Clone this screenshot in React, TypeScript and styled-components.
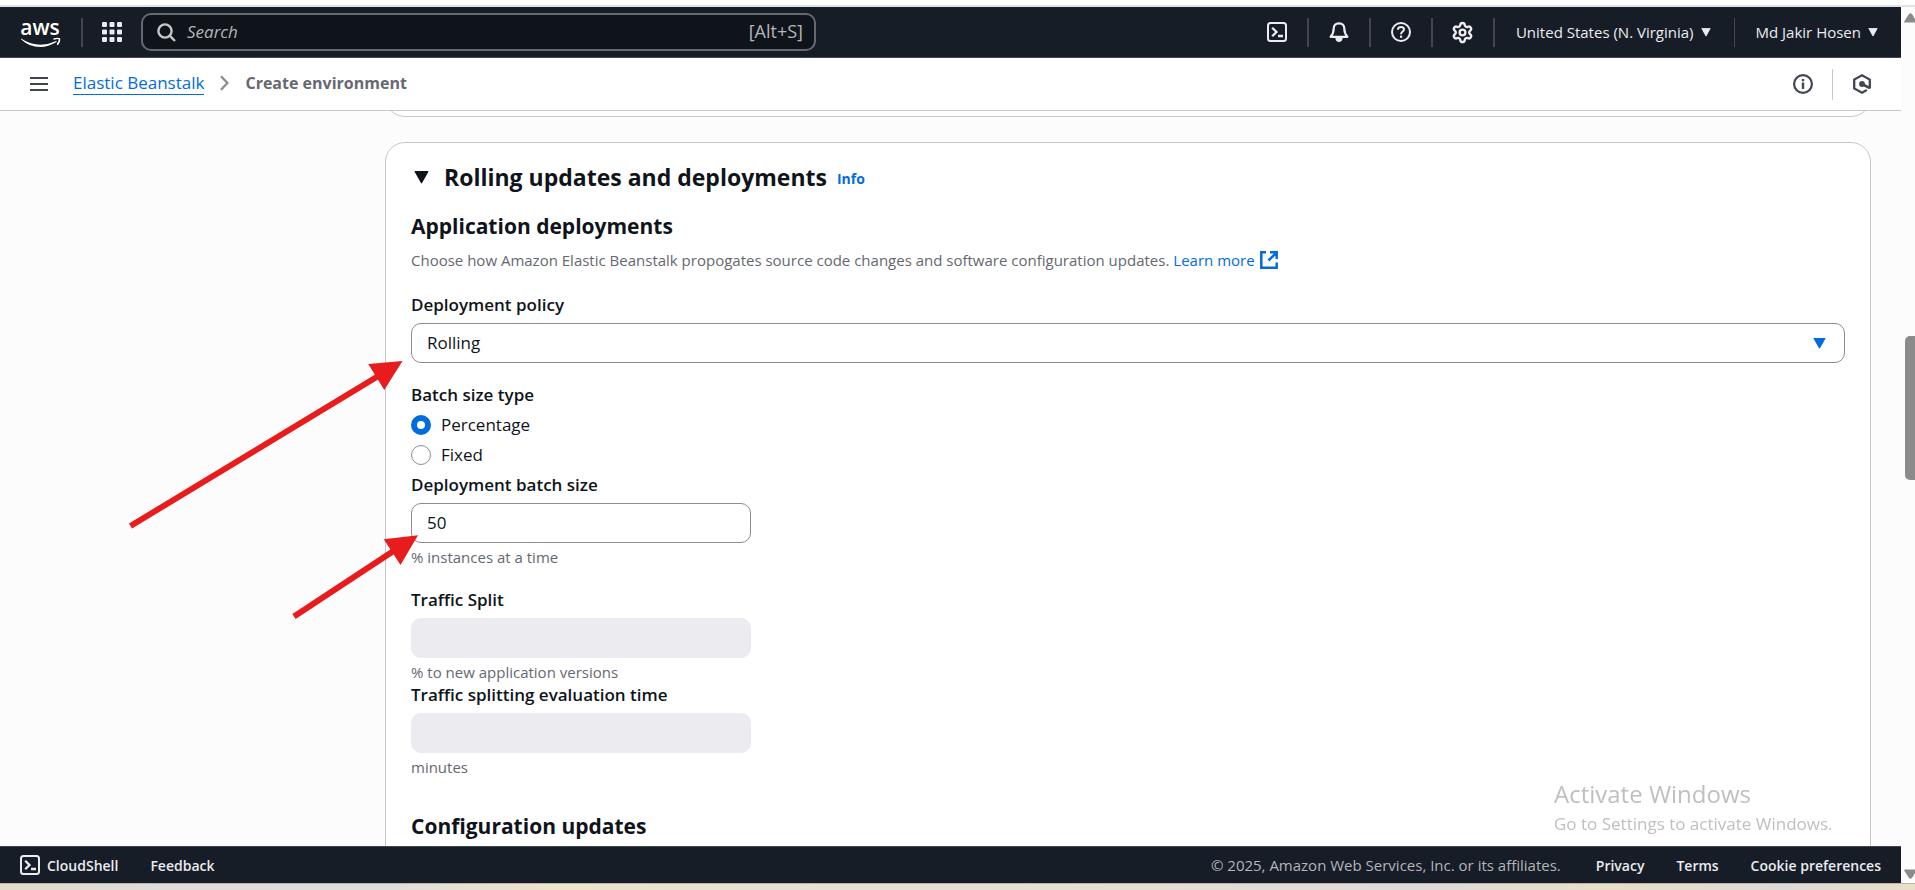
import React, { useState } from "react";
import styled, { createGlobalStyle, css } from "styled-components";
import { Settings } from "lucide-react";

const GlobalStyle = createGlobalStyle`
  *, *::before, *::after { box-sizing: border-box; }
  body { margin: 0; background: #fcfcfd; overflow: hidden; }
  body, button, input, select { font-family: "Open Sans", "Noto Sans", sans-serif; }
  button { border: 0; padding: 0; background: none; color: inherit; cursor: pointer; }
  h2, h3, p, ul, ol { margin: 0; padding: 0; }
  svg { display: block; flex: none; }
`;

const Screen = styled.div`
  display: flex;
  flex-direction: column;
  height: 100vh;
  color: #0f141a;
  font-size: 17px;
  line-height: 25px;
`;

const BrowserEdge = styled.div`
  flex: none;
  height: 7px;
  background: #fff;
  border-bottom: 2px solid #e1e3ea;
`;

const Taskbar = styled.div`
  flex: none;
  height: 7px;
  border-top: 1px solid #b9b5ae;
  background: linear-gradient(90deg, #e3dccb 0%, #dedddb 10%, #dfdedb 20%, #eee4ca 29%, #e6e1d2 40%, #e4e0d4 60%, #dedcd8 74%, #e9dfc8 84%, #dddbd6 93%, #e9dfc8 100%);
`;

const Body = styled.div`
  display: flex;
  flex: 1;
  min-height: 0;
`;

const Page = styled.div`
  display: flex;
  flex: 1;
  flex-direction: column;
  min-width: 0;
`;

/* Scroll bar */
const ScrollTrack = styled.div`
  display: flex;
  flex: none;
  flex-direction: column;
  align-items: flex-end;
  width: 14px;
  padding: 6px 0 4px;
  overflow: hidden;
  background: #fcfcfc;
`;
const ScrollSpace = styled.div<{ $grow: number }>`
  flex: ${(p) => p.$grow} 1 0;
`;
const ScrollThumb = styled.div`
  flex: 144 1 0;
  width: 10px;
  border-radius: 5px 0 0 5px;
  background: #8b8b8b;
`;

/* Top navigation */
const TopNav = styled.header`
  display: flex;
  flex: none;
  align-items: center;
  height: 51px;
  border-bottom: 1px solid #424650;
  background: #161d26;
  color: #ebebf0;
  font-size: 15px;
  font-weight: 500;
`;
const LogoLink = styled.a`
  padding: 0 20px;
`;
const Divider = styled.span<{ $thin?: boolean; $light?: boolean }>`
  flex: none;
  width: ${(p) => (p.$thin ? 1 : 2)}px;
  height: ${(p) => (p.$light ? 31 : 29)}px;
  background: ${(p) => (p.$light ? "#c6c6cd" : "#424650")};
`;
const IconButton = styled.button<{ $narrow?: boolean }>`
  display: flex;
  align-items: center;
  justify-content: center;
  width: ${(p) => (p.$narrow ? 58 : 60)}px;
  height: 40px;
`;
const SearchBox = styled.label`
  display: flex;
  align-items: center;
  gap: 11px;
  width: 675px;
  height: 38px;
  padding: 0 11px 0 14px;
  border: 2px solid #656871;
  border-radius: 10px;
  background: #0f141a;
`;
const SearchInput = styled.input`
  flex: 1;
  min-width: 0;
  padding: 0 0 2px;
  border: 0;
  outline: 0;
  background: transparent;
  color: #ebebf0;
  font-size: 17px;
  &::placeholder { color: #b4b4bb; font-style: italic; opacity: 1; }
`;
const Shortcut = styled.span`
  padding-bottom: 2px;
  color: #b4b4bb;
  font-size: 18px;
  font-weight: 400;
`;
const NavEnd = styled.div<{ $inset?: boolean }>`
  display: flex;
  align-items: center;
  margin-left: auto;
  padding-right: ${(p) => (p.$inset ? 10 : 0)}px;
`;
const MenuButton = styled.button`
  display: flex;
  align-items: center;
  gap: 7px;
  height: 40px;
  padding: 0 23px 0 21px;
  font-size: 15px;
  font-weight: 500;
  white-space: nowrap;
`;

/* Breadcrumb bar */
const CrumbBar = styled.nav`
  display: flex;
  flex: none;
  align-items: center;
  height: 53px;
  padding-left: 30px;
  border-bottom: 1px solid #c6c6cd;
  background: #fff;
  color: #424650;
`;
const Crumbs = styled.ol`
  display: flex;
  align-items: center;
  gap: 16px;
  margin-left: 25px;
  padding-bottom: 2px;
  list-style: none;
`;
const Crumb = styled.li`
  display: flex;
  align-items: center;
  gap: 16px;
  color: #656871;
  font-weight: 700;
  font-size: 16px;
`;
const CrumbLink = styled.a`
  border-bottom: 1px solid #006ce0;
  color: #006ce0;
  font-size: 17px;
  font-weight: 400;
  line-height: 22px;
  text-decoration: none;
`;

/* Content */
const Main = styled.main`
  flex: 1;
  min-height: 0;
  padding: 0 30px 0 385px;
  overflow: hidden;
  background: #fcfcfd;
`;
const cardFrame = css`
  border: 1px solid #c6c6cd;
  border-radius: 20px;
  background: #fff;
`;
const PreviousCard = styled.section`
  ${cardFrame}
  height: 40px;
  margin: -34px 0 25px;
`;
const Card = styled.section`
  ${cardFrame}
  padding: 20px 25px 60px;
`;
const CardHeader = styled.div`
  display: flex;
  align-items: baseline;
  gap: 10px;
  margin-bottom: 20px;
`;
const ExpandButton = styled.button`
  display: flex;
  align-items: center;
  gap: 15px;
  padding-left: 3px;
  font-size: 23px;
  font-weight: 700;
  line-height: 28px;
`;
const InfoLink = styled.a`
  color: #006ce0;
  font-size: 14px;
  font-weight: 700;
  text-decoration: none;
`;
const SectionTitle = styled.h3`
  font-size: 21px;
  font-weight: 700;
  line-height: 30px;
`;
const Description = styled.p`
  display: flex;
  align-items: center;
  gap: 4px;
  margin: 9px 0 22px;
  color: #656871;
  font-size: 15px;
  line-height: 20px;
  white-space: nowrap;
`;
const ExternalLink = styled.a`
  display: inline-flex;
  align-items: center;
  gap: 5px;
  color: #006ce0;
  text-decoration: none;
`;
const Field = styled.div<{ $after?: number }>`
  display: flex;
  flex-direction: column;
  gap: 6px;
  margin-bottom: ${(p) => p.$after ?? 0}px;
`;
const FieldLabel = styled.label`
  font-weight: 600;
`;
const RadioGroup = styled.fieldset`
  display: flex;
  flex-direction: column;
  gap: 5px;
  margin: 0 0 5px;
  padding: 0;
  border: 0;
`;
const GroupLabel = styled.legend`
  margin-bottom: 5px;
  padding: 0;
  font-weight: 600;
`;
const RadioLabel = styled.label`
  display: flex;
  align-items: center;
  gap: 10px;
`;
const Radio = styled.input`
  appearance: none;
  width: 20px;
  height: 20px;
  margin: 1px 0 0;
  border: 1px solid #8c8c94;
  border-radius: 50%;
  background: #fff;
  &:checked { border: 6px solid #006ce0; }
`;
const controlFrame = css`
  height: 40px;
  padding: 0 15px 2px;
  border: 1px solid #8c8c94;
  border-radius: 10px;
  background: #fff;
  color: #0f141a;
  font-size: 17px;
`;
const TextInput = styled.input`
  ${controlFrame}
  width: 340px;
  &:disabled { border-color: #ebebf0; background: #ebebf0; }
`;
const SelectWrap = styled.div`
  display: grid;
  align-items: center;
  & > * { grid-area: 1 / 1; }
  & > svg { justify-self: end; margin-right: 19px; pointer-events: none; }
`;
const SelectInput = styled.select`
  ${controlFrame}
  appearance: none;
  width: 100%;
`;
const Hint = styled.p`
  margin-top: -2px;
  color: #656871;
  font-size: 15px;
  line-height: 20px;
`;

/* Footer */
const Footer = styled.footer`
  display: flex;
  flex: none;
  align-items: center;
  justify-content: space-between;
  height: 37px;
  padding: 0 20px;
  border-top: 1px solid #424650;
  background: #161d26;
  color: #ebebf0;
  font-size: 14px;
  font-weight: 600;
`;
const FooterGroup = styled.div`
  display: flex;
  align-items: center;
  gap: 32px;
`;
const FooterButton = styled.button`
  display: flex;
  align-items: center;
  gap: 7px;
  font-size: 14px;
  font-weight: 600;
`;
const FooterLink = styled.a`
  color: inherit;
  text-decoration: none;
`;
const Copyright = styled.small`
  margin-right: 3px;
  color: #b4b4bb;
  font-size: 15px;
  font-weight: 400;
`;

/* Layers over the page */
const Annotations = styled.svg`
  position: fixed;
  top: 350px;
  left: 120px;
  pointer-events: none;
`;
const Watermark = styled.aside`
  position: fixed;
  right: 77px;
  bottom: 54px;
  width: 284px;
  color: #bfbfbf;
  font-size: 17px;
  line-height: 24px;
  white-space: nowrap;
  pointer-events: none;
`;
const WatermarkTitle = styled.p`
  font-size: 24px;
  line-height: 36px;
`;

function Caret({ width, height, color }: { width: number; height: number; color: string }) {
  return (
    <svg width={width} height={height} viewBox="0 0 12 10" preserveAspectRatio="none" aria-hidden="true">
      <path d="M1 .5h10L6 9z" fill={color} stroke={color} strokeLinejoin="round" />
    </svg>
  );
}

function AwsLogo() {
  return (
    <svg width="41" height="38" viewBox="0 -8 41 38" role="img" aria-label="AWS home">
      <text x="20" y="14" textAnchor="middle" fill="#fff" fontFamily="Open Sans" fontSize="21" fontWeight="600">aws</text>
      <path d="M1 17.500Q18 28.500 35.500 20.200Q37 19.600 36.500 20.900Q28 26 20.500 26Q9 26 1 18.200z" fill="#fff" />
      <path d="M33.500 18.200Q37.800 16.800 39.400 17.800Q40 20.500 37.200 23.700" fill="none" stroke="#fff" strokeWidth="1.500" />
    </svg>
  );
}

function TerminalIcon() {
  return (
    <svg width="20" height="20" viewBox="0 0 20 20" fill="none" stroke="#ebebf0" strokeWidth="2" aria-hidden="true">
      <rect x="1" y="1" width="18" height="18" rx="2.500" />
      <path d="M5.200 5.800 9.500 10l-4.300 4.300M11 14h5" strokeWidth="2.300" />
    </svg>
  );
}

function BellIcon() {
  return (
    <svg width="20" height="20" viewBox="0 0 20 20" fill="none" stroke="#ebebf0" strokeWidth="2.200" strokeLinejoin="round" aria-hidden="true">
      <path d="M10 1.300C6.500 1.300 4.700 3.700 4.700 6.600C4.700 10.500 4.300 12 1.600 14.800h16.800C15.700 12 15.300 10.500 15.300 6.600C15.300 3.700 13.500 1.300 10 1.300z" />
      <path d="M6.300 15.500c0 6 7.400 6 7.400 0z" fill="#ebebf0" stroke="none" />
    </svg>
  );
}

function HelpIcon() {
  return (
    <svg width="20" height="20" viewBox="0 0 20 20" fill="none" stroke="#ebebf0" strokeWidth="2" aria-hidden="true">
      <circle cx="10" cy="10" r="9" />
      <path d="M6.800 7.800C7 3.900 13.300 4.200 13 7.600C12.800 9.600 10 9.600 10 12.300" />
      <path d="M9 13.600h2.200v2.200H9z" fill="#ebebf0" stroke="none" />
    </svg>
  );
}

function AppsIcon() {
  const spots = [0, 7.500, 15];
  return (
    <svg width="20" height="20" viewBox="0 0 20 20" fill="#ebebf0" aria-hidden="true">
      {spots.map((y) => spots.map((x) => <rect key={`${x}-${y}`} x={x} y={y} width="5" height="5" rx="1" />))}
    </svg>
  );
}

function SearchIcon() {
  return (
    <svg width="19" height="19" viewBox="0 0 19 19" fill="none" stroke="#c6c6cd" strokeWidth="2.400" aria-hidden="true">
      <circle cx="8" cy="8" r="6.600" />
      <path d="m12.600 12.600 5.400 5.400" />
    </svg>
  );
}

function MenuIcon() {
  return (
    <svg width="18" height="16" viewBox="0 0 18 16" fill="none" stroke="#424650" strokeWidth="2" aria-hidden="true">
      <path d="M0 2h18M0 8h18M0 14h18" />
    </svg>
  );
}

function ChevronIcon() {
  return (
    <svg width="9" height="16" viewBox="0 0 9 16" fill="none" stroke="#8c8c94" strokeWidth="2.400" aria-hidden="true">
      <path d="m1 1.200 6.400 6.800L1 14.800" />
    </svg>
  );
}

function InfoIcon() {
  return (
    <svg width="20" height="20" viewBox="0 0 20 20" fill="none" stroke="#424650" strokeWidth="2.200" aria-hidden="true">
      <circle cx="10" cy="10" r="8.900" />
      <path d="M10 8.500V15M10 5v2.200" strokeWidth="2.400" />
    </svg>
  );
}

function HexIcon() {
  return (
    <svg width="20" height="20" viewBox="0 0 20 20" fill="none" stroke="#424650" strokeWidth="2.300" aria-hidden="true">
      <path d="M17.800 14.600V5.600L10 1.300 2.200 5.600v8.800L10 18.700l4.800-2.700" />
      <path d="m10 10 7.800 4.200" strokeWidth="2.600" />
      <circle cx="10" cy="10" r="2.900" fill="#424650" stroke="none" />
    </svg>
  );
}

function ExternalIcon() {
  return (
    <svg width="18" height="18" viewBox="0 0 18 18" fill="none" stroke="#006ce0" strokeWidth="2.500" aria-hidden="true">
      <path d="M6 1.300H1.300v15.400h15.400V11.500M10 1.300h6.700V8M16.500 1.600 8.500 9.500" />
    </svg>
  );
}

export default function App() {
  const [batchType, setBatchType] = useState("percentage");
  const [batchSize, setBatchSize] = useState("50");

  return (
    <>
      <GlobalStyle />
      <Screen>
        <BrowserEdge />
        <Body>
          <Page>
            <TopNav>
              <LogoLink href="#home"><AwsLogo /></LogoLink>
              <Divider />
              <IconButton aria-label="Services" $narrow><AppsIcon /></IconButton>
              <SearchBox>
                <SearchIcon />
                <SearchInput type="search" placeholder="Search" aria-label="Search" />
                <Shortcut>[Alt+S]</Shortcut>
              </SearchBox>
              <NavEnd>
                <IconButton aria-label="CloudShell"><TerminalIcon /></IconButton>
                <Divider />
                <IconButton aria-label="Notifications"><BellIcon /></IconButton>
                <Divider />
                <IconButton aria-label="Help"><HelpIcon /></IconButton>
                <Divider />
                <IconButton aria-label="Settings"><Settings size={23} strokeWidth={2.5} color="#ebebf0" /></IconButton>
                <Divider />
                <MenuButton>United States (N. Virginia)<Caret width={10} height={9} color="#ebebf0" /></MenuButton>
                <Divider $thin />
                <MenuButton>Md Jakir Hosen<Caret width={10} height={9} color="#ebebf0" /></MenuButton>
              </NavEnd>
            </TopNav>

            <CrumbBar aria-label="Breadcrumb">
              <button aria-label="Open navigation"><MenuIcon /></button>
              <Crumbs>
                <Crumb><CrumbLink href="#elastic-beanstalk">Elastic Beanstalk</CrumbLink><ChevronIcon /></Crumb>
                <Crumb aria-current="page">Create environment</Crumb>
              </Crumbs>
              <NavEnd $inset>
                <IconButton aria-label="Information" $narrow><InfoIcon /></IconButton>
                <Divider $thin $light />
                <IconButton aria-label="Diagnostics" $narrow><HexIcon /></IconButton>
              </NavEnd>
            </CrumbBar>

            <Main>
              <PreviousCard />
              <Card>
                <CardHeader>
                  <h2>
                    <ExpandButton aria-expanded="true">
                      <Caret width={15} height={13} color="#0f141a" />
                      Rolling updates and deployments
                    </ExpandButton>
                  </h2>
                  <InfoLink href="#info">Info</InfoLink>
                </CardHeader>

                <SectionTitle>Application deployments</SectionTitle>
                <Description>
                  Choose how Amazon Elastic Beanstalk propogates source code changes and software configuration updates.
                  <ExternalLink href="#learn-more">Learn more<ExternalIcon /></ExternalLink>
                </Description>

                <Field $after={19}>
                  <FieldLabel htmlFor="policy">Deployment policy</FieldLabel>
                  <SelectWrap>
                    <SelectInput id="policy" defaultValue="Rolling">
                      <option>All at once</option>
                      <option>Rolling</option>
                      <option>Immutable</option>
                    </SelectInput>
                    <Caret width={13} height={11} color="#006ce0" />
                  </SelectWrap>
                </Field>

                <RadioGroup>
                  <GroupLabel>Batch size type</GroupLabel>
                  <RadioLabel>
                    <Radio type="radio" name="batch" checked={batchType === "percentage"} onChange={() => setBatchType("percentage")} />
                    Percentage
                  </RadioLabel>
                  <RadioLabel>
                    <Radio type="radio" name="batch" checked={batchType === "fixed"} onChange={() => setBatchType("fixed")} />
                    Fixed
                  </RadioLabel>
                </RadioGroup>

                <Field $after={20}>
                  <FieldLabel htmlFor="batch-size">Deployment batch size</FieldLabel>
                  <TextInput id="batch-size" value={batchSize} onChange={(e) => setBatchSize(e.target.value)} />
                  <Hint>% instances at a time</Hint>
                </Field>
                <Field>
                  <FieldLabel htmlFor="split">Traffic Split</FieldLabel>
                  <TextInput id="split" disabled />
                  <Hint>% to new application versions</Hint>
                </Field>
                <Field $after={34}>
                  <FieldLabel htmlFor="evaluation">Traffic splitting evaluation time</FieldLabel>
                  <TextInput id="evaluation" disabled />
                  <Hint>minutes</Hint>
                </Field>

                <SectionTitle>Configuration updates</SectionTitle>
              </Card>
            </Main>

            <Footer>
              <FooterGroup>
                <FooterButton><TerminalIcon />CloudShell</FooterButton>
                <FooterButton>Feedback</FooterButton>
              </FooterGroup>
              <FooterGroup>
                <Copyright>© 2025, Amazon Web Services, Inc. or its affiliates.</Copyright>
                <FooterLink href="#privacy">Privacy</FooterLink>
                <FooterLink href="#terms">Terms</FooterLink>
                <FooterButton>Cookie preferences</FooterButton>
              </FooterGroup>
            </Footer>
          </Page>

          <ScrollTrack aria-hidden="true">
            <svg width="11" height="10" viewBox="0 0 11 10"><path d="M1 9.500Q-.5 9.500.5 8L5 1Q6.500-.5 8 1l5 8.500z" fill="#8b8b8b" /></svg>
            <ScrollSpace $grow={313} />
            <ScrollThumb />
            <ScrollSpace $grow={389} />
            <svg width="11" height="10" viewBox="0 0 11 10"><path d="M1 .5Q-.5.5.5 2L5 9q1.500 1.500 3 0l5-8.500z" fill="#8b8b8b" /></svg>
          </ScrollTrack>
        </Body>
        <Taskbar />
      </Screen>

      <Annotations width="310" height="280" viewBox="120 350 310 280" fill="#e81c1c" stroke="#e81c1c" aria-hidden="true">
        <path d="M130.500 526 380 375" strokeWidth="6" />
        <path d="M402.500 361 368.300 364 384.300 390z" stroke="none" />
        <path d="M294 616.500 395 550" strokeWidth="6" />
        <path d="M418 535.300 383.800 539.300 400.500 565z" stroke="none" />
      </Annotations>

      <Watermark>
        <WatermarkTitle>Activate Windows</WatermarkTitle>
        <p>Go to Settings to activate Windows.</p>
      </Watermark>
    </>
  );
}
